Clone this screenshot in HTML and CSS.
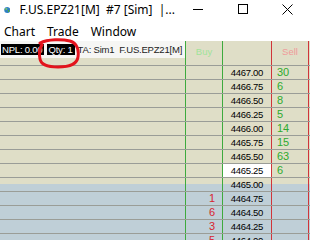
FILE: index.html
```html
<!DOCTYPE html>
<html lang="en">
<head>
  <meta charset="UTF-8" />
  <title>F.US.EPZ21[M] #7 [Sim]</title>
  <link rel="stylesheet" href="styles.css">
</head>
<body>

  <!-- Title bar -->
  <div class="titlebar">
    <svg class="globe" width="14" height="14" viewBox="0 0 14 14">
      <circle cx="7" cy="7" r="6.5" fill="#2f7fc4"/>
      <path d="M3 3.5 C5 2 7 2.5 7.5 4.5 C6.5 6 5 5.5 4.5 7.5 C3.5 8 2 7 1.6 5.5 Z" fill="#4caf3c"/>
      <path d="M8.5 7 C10 6.5 12 7.5 12.2 9 C11 11.5 9.5 12 8.5 11 C8 9.5 9 8.5 8.5 7 Z" fill="#4caf3c"/>
      <circle cx="5" cy="4.5" r="2.5" fill="#ffffff" opacity="0.25"/>
    </svg>
    <div class="title">F.US.EPZ21[M]&nbsp; #7 [Sim]&nbsp; |...</div>
    <div class="controls">
      <span class="ctl">
        <svg width="10" height="10" viewBox="0 0 10 10"><path d="M0 5.5 H10" stroke="#000" stroke-width="1"/></svg>
      </span>
      <span class="ctl">
        <svg width="10" height="10" viewBox="0 0 10 10"><rect x="0.5" y="0.5" width="9" height="9" fill="none" stroke="#000" stroke-width="1"/></svg>
      </span>
      <span class="ctl">
        <svg width="11" height="11" viewBox="0 0 11 11"><path d="M0.5 0.5 L10.5 10.5 M10.5 0.5 L0.5 10.5" stroke="#000" stroke-width="1"/></svg>
      </span>
    </div>
  </div>

  <!-- Menu -->
  <div class="menubar">
    <span>Chart</span>
    <span>Trade</span>
    <span>Window</span>
  </div>

  <!-- Price ladder -->
  <div class="ladder">
    <div class="row head">
      <div class="cell chart">
        <div class="toolbar">
          <span class="tag">NPL: 0.00</span>
          <span class="tag">Qty: 1</span>
          <span class="info">TA: Sim1&nbsp; F.US.EPZ21[M]</span>
        </div>
      </div>
      <div class="cell buy"><span class="buy-head">Buy</span></div>
      <div class="cell price"></div>
      <div class="cell sell"><span class="sell-head">Sell</span></div>
      <div class="cell edge"></div>
    </div>

    <div class="row ask"><div class="cell chart"></div><div class="cell buy"></div><div class="cell price">4467.00</div><div class="cell sell">30</div><div class="cell edge"></div></div>
    <div class="row ask"><div class="cell chart"></div><div class="cell buy"></div><div class="cell price">4466.75</div><div class="cell sell">6</div><div class="cell edge"></div></div>
    <div class="row ask"><div class="cell chart"></div><div class="cell buy"></div><div class="cell price">4466.50</div><div class="cell sell">8</div><div class="cell edge"></div></div>
    <div class="row ask"><div class="cell chart"></div><div class="cell buy"></div><div class="cell price">4466.25</div><div class="cell sell">5</div><div class="cell edge"></div></div>
    <div class="row ask"><div class="cell chart"></div><div class="cell buy"></div><div class="cell price">4466.00</div><div class="cell sell">14</div><div class="cell edge"></div></div>
    <div class="row ask"><div class="cell chart"></div><div class="cell buy"></div><div class="cell price">4465.75</div><div class="cell sell">15</div><div class="cell edge"></div></div>
    <div class="row ask"><div class="cell chart"></div><div class="cell buy"></div><div class="cell price">4465.50</div><div class="cell sell">63</div><div class="cell edge"></div></div>
    <div class="row ask"><div class="cell chart"></div><div class="cell buy"></div><div class="cell price last">4465.25</div><div class="cell sell">6</div><div class="cell edge"></div></div>
    <div class="row split"><div class="cell chart"></div><div class="cell buy"></div><div class="cell price">4465.00</div><div class="cell sell"></div><div class="cell edge"></div></div>
    <div class="row bid"><div class="cell chart"></div><div class="cell buy">1</div><div class="cell price">4464.75</div><div class="cell sell"></div><div class="cell edge"></div></div>
    <div class="row bid"><div class="cell chart"></div><div class="cell buy">6</div><div class="cell price">4464.50</div><div class="cell sell"></div><div class="cell edge"></div></div>
    <div class="row bid"><div class="cell chart"></div><div class="cell buy">3</div><div class="cell price">4464.25</div><div class="cell sell"></div><div class="cell edge"></div></div>
    <div class="row bid"><div class="cell chart"></div><div class="cell buy">5</div><div class="cell price">4464.00</div><div class="cell sell"></div><div class="cell edge"></div></div>
  </div>

  <!-- Hand-drawn annotation round the quantity -->
  <svg class="mark" width="48" height="32" viewBox="0 0 48 32">
    <path d="M6 5 C14 1 28 1 36 3 C43 5 45 12 44 19 C43 26 36 29 24 29 C14 29 7 27 6 21 C5 16 5 11 8 7" fill="none" stroke="#e3141d" stroke-width="3" stroke-linecap="round"/>
  </svg>

</body>
</html>
```

FILE: styles.css
```css
body {
  margin: 0;
  width: 310px;
  height: 240px;
  overflow: hidden;
  background-color: #ffffff;
  font-family: "Noto Sans", "Open Sans", sans-serif;
  position: relative;
}

/* Title bar */
.titlebar {
  display: flex;
  align-items: center;
  height: 22px;
  padding-left: 4px;
}
.titlebar .globe {
  margin-top: -2px;
}
.titlebar .title {
  margin-left: 9px;
  margin-top: -3px;
  font-size: 12px;
  color: #000;
  white-space: nowrap;
}
.controls {
  display: flex;
  margin-left: auto;
  margin-top: -4px;
}
.controls .ctl {
  width: 45px;
  display: flex;
  justify-content: center;
}

/* Menu */
.menubar {
  display: flex;
  gap: 12px;
  height: 19px;
  padding-left: 4px;
  font-size: 12px;
  align-items: center;
  color: #000;
}

/* Ladder */
.ladder {
  font-family: "Liberation Sans", Arial, sans-serif;
}
.row {
  display: flex;
  height: 13px;
  border-bottom: 1px solid #9a9d97;
  background-color: #dfdec7;
}
.row.head {
  height: 24px;
}
.row.bid {
  background-color: #bfcfd7;
}
.row.split {
  background: linear-gradient(#dfdec7 0, #dfdec7 6px, #bfcfd7 6px);
}
.cell {
  box-sizing: border-box;
  height: 100%;
}
.cell.chart {
  width: 186px;
  border-right: 1px solid #3eaa3e;
}
.cell.buy {
  width: 37px;
  border-right: 1px solid #3eaa3e;
  text-align: right;
  padding-right: 7px;
  color: #d8232f;
  font-size: 11px;
  line-height: 13px;
}
.cell.price {
  width: 49px;
  border-right: 1px solid #d0353a;
  text-align: right;
  padding-right: 8px;
  font-size: 9.5px;
  letter-spacing: -0.3px;
  line-height: 13px;
  color: #000;
}
.cell.price.last {
  background-color: #ffffff;
}
.cell.sell {
  width: 37px;
  border-right: 1px solid #d0353a;
  padding-left: 5px;
  color: #2eaa2e;
  font-size: 11px;
  line-height: 13px;
}
.cell.edge {
  flex: 1;
}

.head .cell.buy,
.head .cell.sell {
  text-align: center;
  padding: 0;
  font-size: 9.5px;
  line-height: 22px;
}
.buy-head {
  color: #9fe39a;
}
.sell-head {
  color: #f09a9a;
}

/* Toolbar over the chart column */
.toolbar {
  display: flex;
  align-items: center;
  gap: 3px;
  height: 17px;
  background-color: #f6f6f4;
  padding-left: 1px;
  font-size: 9.5px;
  letter-spacing: -0.2px;
  white-space: nowrap;
}
.toolbar .tag {
  background-color: #000;
  color: #fff;
  padding: 0 2px 0 1px;
  line-height: 11px;
}
.toolbar .info {
  color: #222;
}

/* Annotation */
.mark {
  position: absolute;
  left: 34px;
  top: 38px;
}
```
